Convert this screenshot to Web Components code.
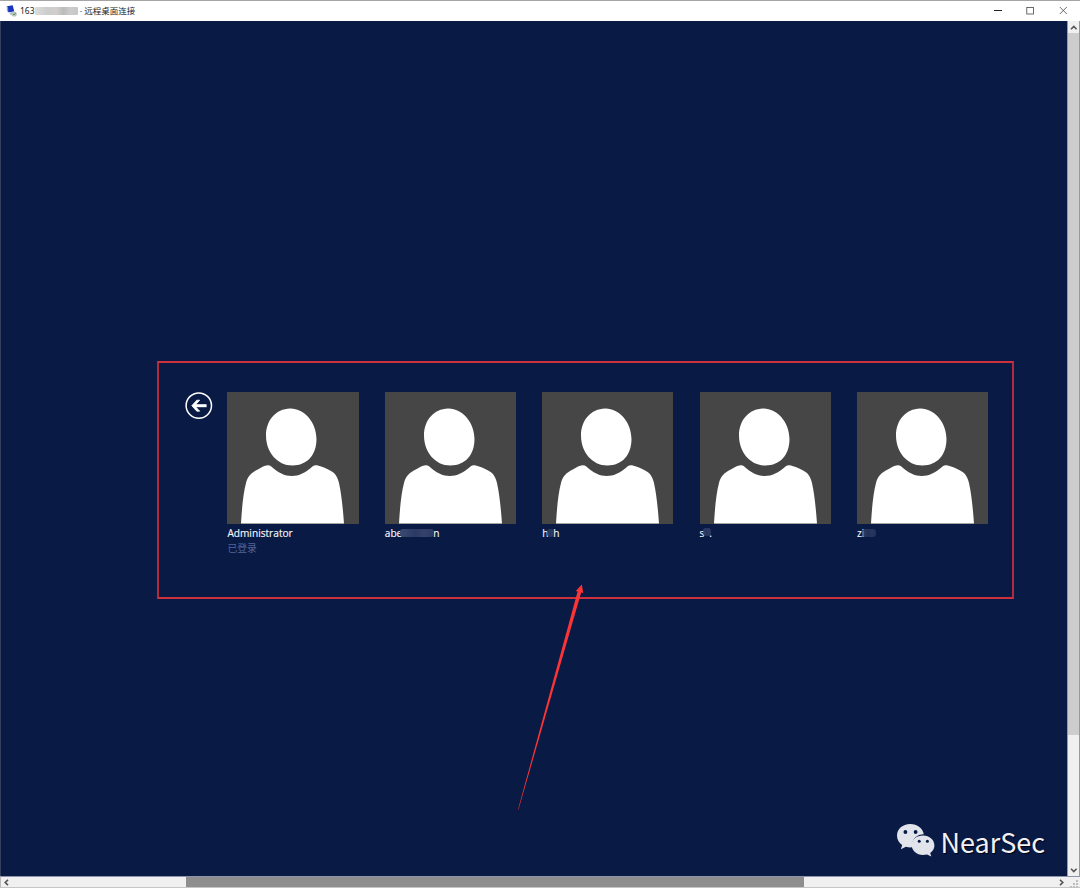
<!DOCTYPE html>
<html lang="zh-CN">
<head>
<meta charset="utf-8">
<title>远程桌面连接</title>
<style>
html,body{margin:0;width:1080px;height:888px;overflow:hidden;background:#fff}
body{font-family:"Open Sans","Noto Sans CJK SC",sans-serif}
</style>
</head>
<body>
<remote-window></remote-window>
<script>
function define(name, html) {
  const template = document.createElement('template');
  template.innerHTML = html;
  customElements.define(name, class extends HTMLElement {
    constructor() {
      super();
      this.attachShadow({ mode: 'open' }).append(template.content.cloneNode(true));
    }
  });
}

define('privacy-smudge', `
<style>
:host{display:inline-block;width:40px;height:8px;border-radius:3px;background:var(--smudge,linear-gradient(90deg,#3a4a70,#2b3a64 45%,#354269 70%,#2c3b65));filter:blur(.5px)}
</style>`);

define('title-bar', `
<style>
:host{display:flex;box-sizing:border-box;height:21px;border-top:1px solid #a5a5a5;background:#fff;color:#222;align-items:center;padding-left:6px;font:8.5px/18px "Noto Sans","Noto Sans CJK SC",sans-serif}
.icon{width:11px;height:12px;margin-right:3px;flex:none}
span{margin-top:-1px}
privacy-smudge{width:43px;height:8px;margin:-1px 2px 0 0;border-radius:1px;--smudge:linear-gradient(90deg,#ddd 0,#ccc 30%,#d3cecd 50%,#bbb 66%,#ccc 82%,#c6c6c6)}
.dash{color:#777;margin-right:2px}
.spacer{flex:1}
.controls{width:98px;height:20px;display:block}
</style>
<svg class="icon" viewBox="0 0 11 12"><path d="M1 1.2 6.7.3 8.3 6.5 2 7.2z" fill="#1735bd"/><path d="M.5 1.5 1 6 2.3 7 2 2z" fill="#8aa6d5"/><path d="M3 7.6 8 6.8 9 9 4.7 10.2z" fill="#b6bec7"/><circle cx="8.2" cy="9" r="2.6" fill="#b8c7bd"/><path d="m6.9 9 1 1 1.9-2" fill="none" stroke="#4a8252" stroke-width=".8"/></svg>
<span>163</span><privacy-smudge></privacy-smudge><span class="dash">-</span><span>远程桌面连接</span><span class="spacer"></span>
<svg class="controls" viewBox="0 0 98 20" fill="none"><path d="M12 9.5h8" stroke="#222" stroke-width="1"/><rect x="44.8" y="6.4" width="6.6" height="6.6" stroke="#444" stroke-width=".8"/><path d="m77.8 6 7 7m0-7-7 7" stroke="#444" stroke-width=".8"/></svg>`);

define('back-button', `
<style>:host{display:block;width:28px;height:28px}svg{display:block}</style>
<svg width="28" height="28" viewBox="0 0 28 28" fill="none" stroke="#fff"><circle cx="13.8" cy="13.6" r="12.7" stroke-width="1.5"/><path d="M21.6 13.7H9" stroke-width="3"/><path d="M14.7 8.2h-2.9l-5 5.5 5 5.5h2.9l-5-5.5z" fill="#fff" stroke-width=".8"/></svg>`);

define('user-tile', `
<style>
:host{display:block;width:131.2px;color:#f4f6fa;font:500 10.15px/14px "Open Sans","Noto Sans",sans-serif}
svg{display:block;width:131.2px;height:131.4px;background:#464646}
.name{display:flex;align-items:center;height:14px;margin-top:2.4px;white-space:nowrap;-webkit-text-stroke:.15px #f4f6fa}
.status{color:#56649a;font:9.8px/14px "Noto Sans CJK SC",sans-serif;height:14px;margin-top:1.2px}
</style>
<svg viewBox="0 0 131.2 131.4" preserveAspectRatio="none"><path d="M63 16.4C77 16 89.5 30 89.5 47C89.5 63 80 73.5 65.5 73.5C50 73.5 39 60 39 43.5C39 28 49 16.8 63 16.4Z" fill="#fff"/><path d="M14 131.4C15 115 16.3 101 19 91C20.4 85.5 23 82 28 79C33 76 38 73.2 40.5 73.2Q42.7 73.1 44 74.2C58 87.2 71.5 87.2 85.8 74.2Q87.5 72.9 90 73.3C94 74 100 77 104 79C108.5 81.5 110.5 85 112 91C114.3 101 116 117 117 131.4Z" fill="#fff"/></svg>
<div class="name"><slot></slot></div><div class="status"><slot name="status"></slot></div>`);

define('account-picker', `
<style>
:host{display:flex;box-sizing:border-box;width:857.4px;height:238px;border:2px solid #cf303d;border-left-color:#b02c3c;border-right-color:#b02c3c;padding:29.2px 0 0 26px;align-items:flex-start}
.list{display:grid;grid-template-columns:repeat(5,131.2px);gap:26.2px;margin-left:14.4px}
.smudge-a{width:34px;margin-left:-2px;margin-right:-1px}
.smudge-b{width:7px;margin:1px -1px 0 -1px;opacity:.85}
.smudge-c{width:8px;margin:-1px -2px 0 -1px;opacity:.85}
.smudge-d{width:14px;margin:0 0 0 -2px;opacity:.7}
</style>
<back-button></back-button>
<div class="list">
<user-tile>Administrator<span slot="status">已登录</span></user-tile>
<user-tile>abe<privacy-smudge class="smudge-a"></privacy-smudge>n</user-tile>
<user-tile>h<privacy-smudge class="smudge-b"></privacy-smudge>h</user-tile>
<user-tile>s<privacy-smudge class="smudge-c"></privacy-smudge>.</user-tile>
<user-tile>zi<privacy-smudge class="smudge-d"></privacy-smudge></user-tile>
</div>`);

define('callout-arrow', `
<style>:host{display:block;position:absolute;left:509px;top:560px;width:80px;height:255px}svg{display:block}</style>
<svg width="80" height="255" viewBox="510 581 80 255"><path d="M518 809.5 577.6 591.6 575.8 591 581.8 584.4 583.3 593 581.2 592.6 518.5 809.5z" fill="#fb3436"/></svg>`);

define('channel-mark', `
<style>
:host{display:flex;align-items:center;color:#f1f1f3;font:27px/36px "Noto Sans CJK SC",sans-serif;text-shadow:1px 1px 1px #001}
svg{width:40px;height:36px;margin-right:4.2px}
span{margin-top:2px}
</style>
<svg viewBox="0 0 40 36"><path fill="#e2e4eb" d="M14.2 1C6.7 1 1 6 1 12.7c0 3.9 2 7.1 5.2 9.2l-1.3 4.4 5-2.5c2.3.7 4.6.8 6.7.5a12 12 0 0 1-.3-2.7c0-6 5-10.3 11.5-10.3C27 5.3 21.4 1 14.2 1Z"/><path fill="#e2e4eb" d="M27.1 12.4c-6.6 0-11.5 4.2-11.5 9.7s5 9.9 11.4 9.9c1.4 0 2.8-.2 4.1-.5l4.2 2-1.1-3.6c2.6-1.8 4.2-4.5 4.2-7.5 0-5.6-4.9-10-11.3-10Z"/><g fill="#071945"><circle cx="9.4" cy="9" r="1.9"/><circle cx="19.6" cy="9" r="1.9"/><circle cx="23.2" cy="18.3" r="1.5"/><circle cx="31.4" cy="18.3" r="1.5"/></g></svg><span>NearSec</span>`);

define('remote-desktop', `
<style>
:host{display:flex;flex-direction:column;position:relative;box-sizing:border-box;background:#091a45;padding:340px 0 0 156px;border-left:1px solid #34405e}
channel-mark{margin:223px 22px 0 auto}
</style>
<account-picker></account-picker><channel-mark></channel-mark><callout-arrow></callout-arrow>`);

define('vertical-scroll', `
<style>
:host{display:flex;flex-direction:column;box-sizing:border-box;background:#f0f0f0;border-left:1px solid #9299af;border-right:1px solid #999}
svg{display:block;width:11px;height:12px}.thumb{height:702px;background:#cdcdcd}.space{flex:1}
</style>
<svg viewBox="0 0 11 12"><path d="m3 8.3 2.8-2.8 2.8 2.8" fill="none" stroke="#555" stroke-width="1.6"/></svg><div class="thumb"></div><div class="space"></div><svg viewBox="0 0 11 12"><path d="m3 4.8 2.8 2.8 2.8-2.8" fill="none" stroke="#555" stroke-width="1.6"/></svg>`);

define('horizontal-scroll', `
<style>
:host{display:flex;box-sizing:border-box;background:#f0f0f0;border-top:1px solid #8d94aa;border-bottom:1px solid #c5c5c5;border-left:1px solid #bbb}
svg{display:block;height:11px;width:12px}.lead{width:173px}.thumb{width:618px;background:#8e8e8e}.space{flex:1}.grip{width:13px}
</style>
<svg viewBox="0 0 12 11"><path d="M7 2.8 4.2 5.5 7 8.2" fill="none" stroke="#555" stroke-width="1.6"/></svg><div class="lead"></div><div class="thumb"></div><div class="space"></div><svg viewBox="0 0 12 11"><path d="m5 2.8 2.8 2.7L5 8.2" fill="none" stroke="#555" stroke-width="1.6"/></svg><svg class="grip" viewBox="0 0 13 11"><path d="M9 3h2v2H9zM6 6h2v2H6zm3 0h2v2H9zM3 9h2v2H3zm3 0h2v2H6zm3 0h2v2H9z" fill="#bfbfbf"/></svg>`);

define('remote-window', `
<style>
:host{display:grid;width:1080px;height:888px;grid-template:21px 855px 12px / 1067px 13px;font-family:"Open Sans","Noto Sans CJK SC",sans-serif}
title-bar,horizontal-scroll{grid-column:1/-1}
</style>
<title-bar></title-bar><remote-desktop></remote-desktop><vertical-scroll></vertical-scroll><horizontal-scroll></horizontal-scroll>`);
</script>
</body>
</html>
